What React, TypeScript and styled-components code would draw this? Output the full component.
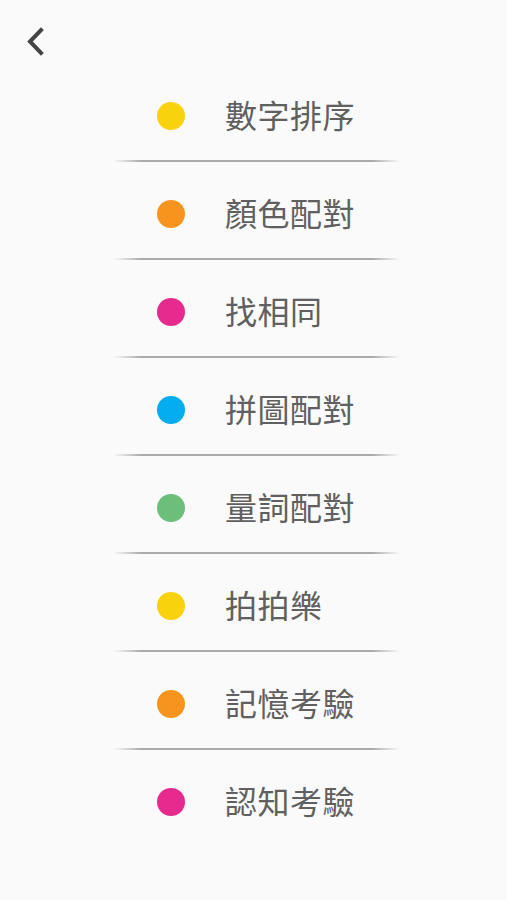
import React from "react";
import styled, { createGlobalStyle } from "styled-components";

const Global = createGlobalStyle`
  html, body { margin: 0; padding: 0; background: #fafafa; }
  body { font-family: "Noto Sans CJK TC", "Noto Sans", sans-serif; }
`;

const Page = styled.div`
  width: 507px;
  height: 900px;
  background: #fafafa;
  display: flex;
  flex-direction: column;
`;

const Header = styled.div`
  height: 64px;
  display: flex;
  align-items: flex-start;
  padding: 27px 0 0 26px;
  box-sizing: border-box;
`;

const BackButton = styled.button`
  border: none;
  background: none;
  padding: 0;
  width: 20px;
  height: 30px;
  display: flex;
  cursor: pointer;
`;

const List = styled.div`
  width: 287px;
  margin-left: 113px;
  display: flex;
  flex-direction: column;
`;

const Row = styled.div`
  height: 96px;
  padding-top: 8px;
  box-sizing: border-box;
  display: flex;
  align-items: center;
  padding-left: 44px;
  gap: 40px;
`;

const Dot = styled.span<{ $color: string }>`
  width: 28px;
  height: 28px;
  border-radius: 50%;
  background: ${(p) => p.$color};
  flex: none;
`;

const Label = styled.span`
  font-family: "Noto Sans CJK TC", "Noto Sans", sans-serif;
  font-size: 32px;
  font-weight: 400;
  line-height: 40px;
  margin-top: -5px;
  color: #606060;
  letter-spacing: 0.5px;
`;

const Divider = styled.div`
  height: 2px;
  background: linear-gradient(
    to right,
    rgba(170, 170, 170, 0),
    rgba(170, 170, 170, 1) 10%,
    rgba(170, 170, 170, 1) 90%,
    rgba(170, 170, 170, 0)
  );
`;

const items = [
  { label: "數字排序", color: "#F8D20D" },
  { label: "顏色配對", color: "#F7941E" },
  { label: "找相同", color: "#E72A8E" },
  { label: "拼圖配對", color: "#04ADEF" },
  { label: "量詞配對", color: "#6DBE7B" },
  { label: "拍拍樂", color: "#F8D20D" },
  { label: "記憶考驗", color: "#F7941E" },
  { label: "認知考驗", color: "#E72A8E" },
];

export default function App() {
  return (
    <Page>
      <Global />
      <Header>
        <BackButton aria-label="back">
          <svg width="20" height="30" viewBox="0 0 20 30">
            <path
              d="M15 3 L4 14.5 L15 26"
              fill="none"
              stroke="#444"
              strokeWidth="4"
              strokeLinecap="square"
              strokeLinejoin="miter"
            />
          </svg>
        </BackButton>
      </Header>
      <List>
        {items.map((it, i) => (
          <React.Fragment key={it.label}>
            <Row>
              <Dot $color={it.color} />
              <Label>{it.label}</Label>
            </Row>
            {i < items.length - 1 && <Divider />}
          </React.Fragment>
        ))}
      </List>
    </Page>
  );
}
